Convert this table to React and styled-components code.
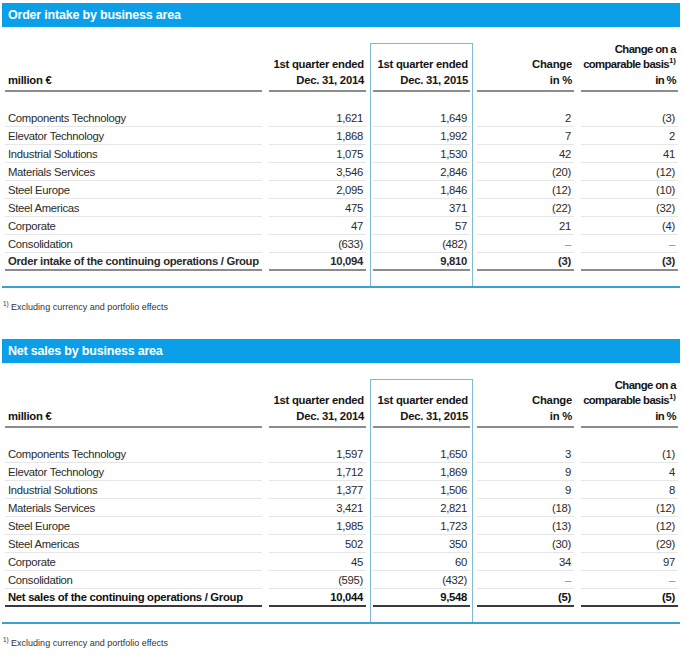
import styled, { createGlobalStyle } from 'styled-components'

const GlobalStyle = createGlobalStyle`
  body {
    margin: 0;
    background: #fff;
    font-family: "Liberation Sans", Arial, sans-serif;
    color: #2a2a2a;
  }
`

const orderRows = [
  ['Components Technology', '1,621', '1,649', '2', '(3)'],
  ['Elevator Technology', '1,868', '1,992', '7', '2'],
  ['Industrial Solutions', '1,075', '1,530', '42', '41'],
  ['Materials Services', '3,546', '2,846', '(20)', '(12)'],
  ['Steel Europe', '2,095', '1,846', '(12)', '(10)'],
  ['Steel Americas', '475', '371', '(22)', '(32)'],
  ['Corporate', '47', '57', '21', '(4)'],
  ['Consolidation', '(633)', '(482)', '–', '–'],
]

const salesRows = [
  ['Components Technology', '1,597', '1,650', '3', '(1)'],
  ['Elevator Technology', '1,712', '1,869', '9', '4'],
  ['Industrial Solutions', '1,377', '1,506', '9', '8'],
  ['Materials Services', '3,421', '2,821', '(18)', '(12)'],
  ['Steel Europe', '1,985', '1,723', '(13)', '(12)'],
  ['Steel Americas', '502', '350', '(30)', '(29)'],
  ['Corporate', '45', '60', '34', '97'],
  ['Consolidation', '(595)', '(432)', '–', '–'],
]

function Headings() {
  const items = [
    <>million €</>,
    <>1st quarter ended<br />Dec. 31, 2014</>,
    <>1st quarter ended<br />Dec. 31, 2015</>,
    <>Change<br />in %</>,
    <>Change on a<br />comparable basis<Sup>1)</Sup><br />in %</>,
  ]
  return items.map((h, i) => (
    <HeadCell key={i} $col={i + 1} $left={i === 0} $tight={i === 4}>
      {h}
    </HeadCell>
  ))
}

function BusinessTable({ title, rows, total, heavy }) {
  const all = [...rows, total]
  return (
    <Section>
      <TitleBar>{title}</TitleBar>
      <TableWrap>
        <Grid>
          <Highlight />
          <Headings />
          {all.map((r, ri) =>
            r.map((v, i) => (
              <Cell
                key={ri + '-' + i}
                $row={ri + 3}
                $col={i + 1}
                $left={i === 0}
                $dash={v === '–'}
                $total={ri === all.length - 1}
                $heavy={heavy}
              >
                {v}
              </Cell>
            ))
          )}
        </Grid>
      </TableWrap>
      <Footnote>
        <Sup>1)</Sup> Excluding currency and portfolio effects
      </Footnote>
    </Section>
  )
}

export default function App() {
  return (
    <>
      <GlobalStyle />
      <Page>
        <BusinessTable
          title="Order intake by business area"
          rows={orderRows}
          total={['Order intake of the continuing operations / Group', '10,094', '9,810', '(3)', '(3)']}
        />
        <BusinessTable
          title="Net sales by business area"
          rows={salesRows}
          total={['Net sales of the continuing operations / Group', '10,044', '9,548', '(5)', '(5)']}
          heavy
        />
      </Page>
    </>
  )
}

/* styles */
const Page = styled.main`
  padding: 3px 4px 0 2px;
  display: flex;
  flex-direction: column;
  gap: 26px;
`

const Section = styled.section`
  display: flex;
  flex-direction: column;
`

const TitleBar = styled.h2`
  margin: 0;
  height: 24px;
  background: #0a9fe8;
  color: #fff;
  font-size: 12.5px;
  font-weight: 700;
  letter-spacing: -0.2px;
  line-height: 25px;
  padding-left: 6px;
`

const TableWrap = styled.div`
  margin-top: 16px;
  border-bottom: 2px solid #3aa2d2;
  padding-left: 3px;
`

const Grid = styled.div`
  display: grid;
  grid-template-columns: 257px repeat(4, 97px);
  grid-template-rows: 49px 17px repeat(9, 18px) 15px;
  column-gap: 7px;
  font-size: 11.3px;
  letter-spacing: -0.3px;
`

const Highlight = styled.div`
  grid-column: 3;
  grid-row: 1 / -1;
  margin: 0 -3px;
  border: 1px solid #7dbcd4;
  border-bottom: none;
`

const HeadCell = styled.div`
  grid-row: 1;
  grid-column: ${(p) => p.$col};
  align-self: end;
  text-align: ${(p) => (p.$left ? 'left' : 'right')};
  padding: 0 2px 2px ${(p) => (p.$tight ? 0 : 3)}px;
  border-bottom: 2px solid #8c8c8c;
  font-weight: 700;
  letter-spacing: ${(p) => (p.$tight ? -0.6 : -0.25)}px;
  white-space: nowrap;
  line-height: 15.5px;
  color: #151515;
`

const Cell = styled.div`
  grid-row: ${(p) => p.$row};
  grid-column: ${(p) => p.$col};
  display: flex;
  align-items: center;
  justify-content: ${(p) => (p.$left ? 'flex-start' : 'flex-end')};
  padding: 0 3px;
  border-bottom: ${(p) =>
    p.$total ? `2px solid ${p.$heavy ? '#3a3a3a' : '#8c8c8c'}` : '1px solid #e6e6e6'};
  font-weight: ${(p) => (p.$total ? 700 : 400)};
  color: ${(p) => (p.$dash ? '#888' : p.$total && p.$heavy ? '#111' : '#2a2a2a')};
  white-space: nowrap;
`

const Sup = styled.sup`
  font-size: 0.7em;
  line-height: 0;
  letter-spacing: 0;
`

const Footnote = styled.p`
  margin: 13px 0 0 1px;
  font-size: 9px;
  color: #333;
  line-height: 12px;
`
